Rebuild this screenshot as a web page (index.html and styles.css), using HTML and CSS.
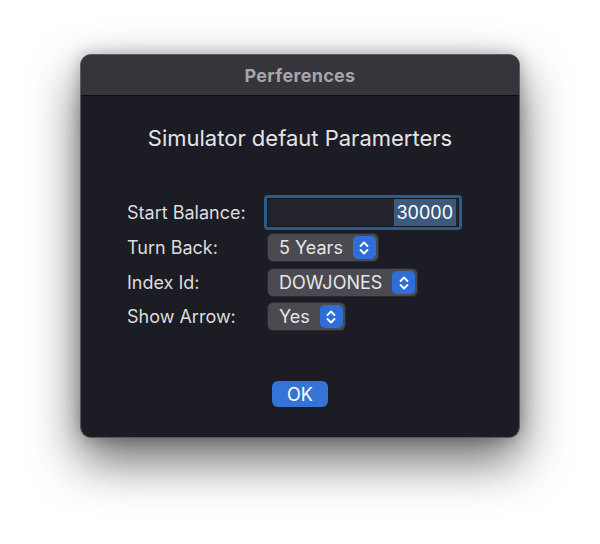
FILE: index.html
```html
<!DOCTYPE html>
<html>
<head>
<meta charset="utf-8">
<link rel="stylesheet" href="styles.css">
</head>
<body>
<div class="window">
  <div class="titlebar">Perferences</div>
  <div class="content">
    <h1 class="heading">Simulator defaut Paramerters</h1>
    <div class="form">
      <div class="row row-field">
        <span class="label">Start Balance:</span>
        <div class="field-ring"><div class="field"><span class="sel">30000</span></div></div>
      </div>
      <div class="row row-pop1">
        <span class="label">Turn Back:</span>
        <div class="popup"><span class="pop-text">5 Years</span><span class="stepper"><svg viewBox="0 0 22 22" width="22" height="22"><path d="M7.5 9 L11 5.5 L14.5 9 M7.5 13 L11 16.5 L14.5 13" fill="none" stroke="#fff" stroke-width="1.8" stroke-linecap="round" stroke-linejoin="round"/></svg></span></div>
      </div>
      <div class="row row-pop2">
        <span class="label">Index Id:</span>
        <div class="popup"><span class="pop-text">DOWJONES</span><span class="stepper"><svg viewBox="0 0 22 22" width="22" height="22"><path d="M7.5 9 L11 5.5 L14.5 9 M7.5 13 L11 16.5 L14.5 13" fill="none" stroke="#fff" stroke-width="1.8" stroke-linecap="round" stroke-linejoin="round"/></svg></span></div>
      </div>
      <div class="row row-pop3">
        <span class="label">Show Arrow:</span>
        <div class="popup"><span class="pop-text">Yes</span><span class="stepper"><svg viewBox="0 0 22 22" width="22" height="22"><path d="M7.5 9 L11 5.5 L14.5 9 M7.5 13 L11 16.5 L14.5 13" fill="none" stroke="#fff" stroke-width="1.8" stroke-linecap="round" stroke-linejoin="round"/></svg></span></div>
      </div>
    </div>
    <div class="actions"><button class="ok">OK</button></div>
  </div>
</div>
</body>
</html>
```
FILE: styles.css
```css
html, body {
  margin: 0;
  padding: 0;
  background: #ffffff;
}
body {
  width: 600px;
  height: 544px;
  overflow: hidden;
  font-family: Inter, "Noto Sans", sans-serif;
}
.window {
  margin: 54px 0 0 80px;
  width: 440px;
  height: 384px;
  box-sizing: border-box;
  border-radius: 11px;
  background: #1c1d24;
  border: 1px solid #5b5b60;
  box-shadow: 0 22px 50px rgba(0,0,0,0.6), 0 0 16px rgba(0,0,0,0.25);
  overflow: hidden;
}
.titlebar {
  height: 40px;
  background: #35353b;
  border-bottom: 1px solid #0e0e12;
  color: #a6a5ab;
  font-weight: 700;
  font-size: 18px;
  display: flex;
  align-items: center;
  justify-content: center;
  letter-spacing: 0.3px;
}
.content {
  padding: 0 0 0 46px;
}
.heading {
  margin: 28px 46px 0 0;
  font-size: 22px;
  font-weight: 400;
  line-height: 28px;
  color: #e4e4e6;
  text-align: center;
}
.form {
  margin-top: 43px;
  display: flex;
  flex-direction: column;
}
.row {
  display: flex;
  align-items: center;
}
.row-pop1 { margin-top: 3px; }
.row-pop2 { margin-top: 6px; }
.row-pop3 { margin-top: 5px; }
.label {
  width: 137px;
  color: #dcdcde;
  font-size: 18px;
}
.field-ring {
  width: 198px;
  height: 35px;
  box-sizing: border-box;
  border: 3px solid #2e5b8a;
  border-radius: 4px;
}
.field {
  height: 100%;
  box-sizing: border-box;
  background: #24252c;
  border: 1px solid #16171c;
  display: flex;
  align-items: center;
  justify-content: flex-end;
  padding-right: 2px;
}
.sel {
  background: #3c5a7e;
  color: #ffffff;
  font-size: 18px;
  line-height: 27px;
  padding: 0 3px 0 2px;
}
.popup {
  margin-left: 3px;
  height: 29px;
  box-sizing: border-box;
  background: #4a4a50;
  border: 1px solid #2a2a30;
  border-radius: 6px;
  display: flex;
  align-items: center;
  padding: 0 2px 0 11px;
  color: #e6e6e8;
  font-size: 18px;
}
.pop-text {
  margin-right: 10px;
}
.stepper {
  width: 23px;
  height: 23px;
  border-radius: 5px;
  background: #2f6ed8;
  display: flex;
  align-items: center;
  justify-content: center;
}
.stepper svg {
  display: block;
}
.actions {
  display: flex;
  justify-content: center;
  margin: 50px 46px 0 0;
}
.ok {
  width: 56px;
  height: 26px;
  border: none;
  border-radius: 6px;
  background: #3474d6;
  color: #ffffff;
  font-family: Inter, "Noto Sans", sans-serif;
  font-size: 18px;
  padding: 0;
}
```
